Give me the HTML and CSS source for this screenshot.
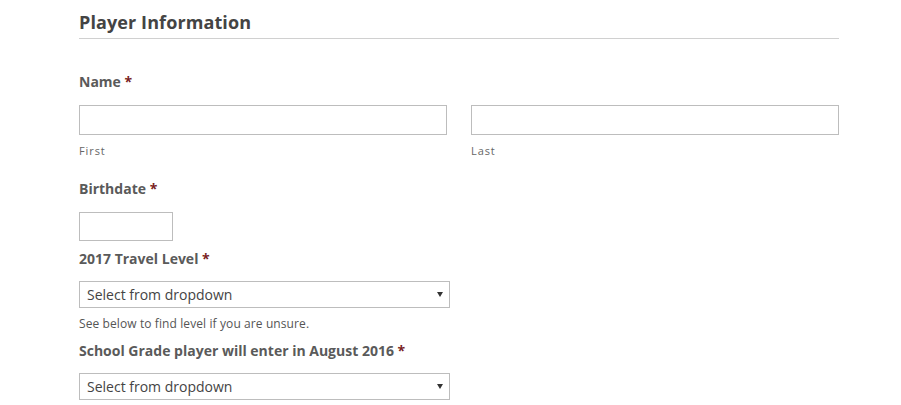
FILE: index.html
```html
<!DOCTYPE html>
<html>
   <head>
      <title>Player Information</title>
      <link rel="stylesheet" href="styles.css">
   </head>
   <body>
      <div class="FormWrap">
         <h2 class="SectionTitle">Player Information</h2>

         <div class="Field FieldName">
            <label class="FieldLabel">Name <span class="Req">*</span></label>
            <div class="NameRow">
               <div class="NamePart">
                  <input type="text" class="TextInput">
                  <span class="SubLabel">First</span>
               </div>
               <div class="NamePart">
                  <input type="text" class="TextInput">
                  <span class="SubLabel">Last</span>
               </div>
            </div>
         </div>

         <div class="Field FieldBirth">
            <label class="FieldLabel">Birthdate <span class="Req">*</span></label>
            <input type="text" class="TextInput DateInput">
         </div>

         <div class="Field FieldLevel">
            <label class="FieldLabel">2017 Travel Level <span class="Req">*</span></label>
            <div class="SelectBox">
               <span>Select from dropdown</span>
               <span class="Arrow"></span>
            </div>
            <div class="Desc">See below to find level if you are unsure.</div>
         </div>

         <div class="Field FieldGrade">
            <label class="FieldLabel">School Grade player will enter in August 2016 <span class="Req">*</span></label>
            <div class="SelectBox">
               <span>Select from dropdown</span>
               <span class="Arrow"></span>
            </div>
         </div>
      </div>
   </body>
</html>
```

FILE: styles.css
```css
body
{
   margin:      0;
   background:  #ffffff;
   font-family: 'Open Sans', 'Liberation Sans', sans-serif;
   color:       #555555;
}
.FormWrap
{
   width:       760px;
   margin-left: 79px;
   padding-top: 10px;
}
.SectionTitle
{
   margin:         0;
   font-size:      18px;
   line-height:    24px;
   font-weight:    700;
   color:          #444444;
   letter-spacing: 0.1px;
   padding-bottom: 4px;
   border-bottom:  1px solid #d0d0d0;
}
.Field
{
   display:        flex;
   flex-direction: column;
   align-items:    flex-start;
}
.FieldName  { margin-top: 33px; }
.FieldBirth { margin-top: 20px; }
.FieldLevel { margin-top: 8px;  }
.FieldGrade { margin-top: 9px;  }
.FieldLabel
{
   font-size:     14px;
   line-height:   20px;
   font-weight:   700;
   color:         #5a5a5a;
   margin-bottom: 13px;
}
.FieldLevel .FieldLabel,
.FieldGrade .FieldLabel
{
   margin-bottom: 12px;
}
.Req
{
   color: #7a1f1f;
}
.NameRow
{
   display: flex;
   gap:     24px;
   width:   760px;
}
.NamePart
{
   flex:           1;
   display:        flex;
   flex-direction: column;
}
.TextInput
{
   box-sizing: border-box;
   height:     30px;
   width:      100%;
   margin:     0;
   border:     1px solid #bdbdbd;
   background: #ffffff;
}
.DateInput
{
   width:  94px;
   height: 29px;
}
.SubLabel
{
   margin-top:     8px;
   font-size:      11px;
   line-height:    16px;
   color:          #666666;
   letter-spacing: 0.9px;
}
.SelectBox
{
   box-sizing:      border-box;
   width:           371px;
   height:          27px;
   border:          1px solid #bdbdbd;
   display:         flex;
   align-items:     center;
   justify-content: space-between;
   padding:         0 6px 0 7px;
   font-size:       14px;
   color:           #444444;
}
.Arrow
{
   width:        0;
   height:       0;
   border-left:  3px solid transparent;
   border-right: 3px solid transparent;
   border-top:   5px solid #333333;
}
.Desc
{
   margin-top:     8px;
   font-size:      12px;
   line-height:    16px;
   color:          #555555;
   letter-spacing: 0.1px;
}
```
